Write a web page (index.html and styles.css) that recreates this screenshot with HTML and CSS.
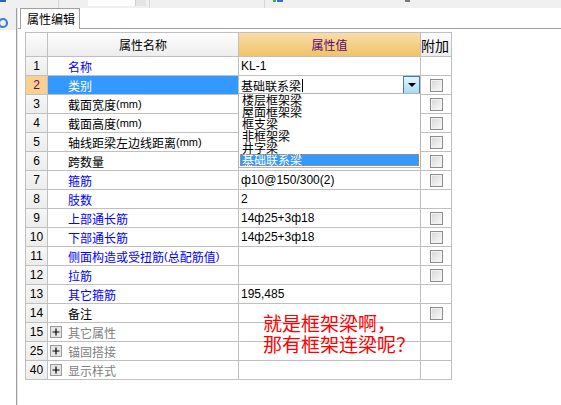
FILE: index.html
```html
<!DOCTYPE html>
<html lang="zh">
<head>
<meta charset="utf-8">
<title>属性编辑</title>
<link rel="stylesheet" href="styles.css">
</head>
<body>
<div class="top">
  <div class="tb-a"><span class="tb-blue"></span></div>
  <div class="tb-b"></div>
  <div class="tb-combo"><span class="tb-field"></span><span class="tb-btn"></span></div>
  <div class="tb-c"></div>
  <div class="tb-d"><span class="tb-g"></span><span class="tb-bl"></span></div>
  <div class="tb-e"><span class="tb-gray"></span></div>
</div>
<div class="main">
  <div class="side">
    <div class="side-top">
      <svg class="mag" width="16" height="22" viewBox="0 0 16 22"><circle cx="3" cy="15" r="4" fill="none" stroke="#3d7fd6" stroke-width="2.2"/></svg>
    </div>
  </div>
  <div class="divider"></div>
  <div class="pane">
    <div class="tabs"><div class="tab">属性编辑</div></div>
    <div class="page">
      <div class="grid">
        <div class="h"></div><div class="h">属性名称</div><div class="h hval">属性值</div><div class="h hadd">附加</div>

        <div class="num">1</div><div class="name blue">名称</div><div class="val">KL-1</div><div class="add"></div>
        <div class="num numsel">2</div><div class="name namesel">类别</div><div class="val combo"><span class="ctext">基础联系梁<span class="caret"></span></span><span class="ddbtn"><span class="tri"></span></span></div><div class="add"><span class="cb"></span></div>
        <div class="num">3</div><div class="name">截面宽度<span class="unit">(mm)</span></div><div class="val"></div><div class="add"><span class="cb"></span></div>
        <div class="num">4</div><div class="name">截面高度<span class="unit">(mm)</span></div><div class="val"></div><div class="add"><span class="cb"></span></div>
        <div class="num">5</div><div class="name">轴线距梁左边线距离<span class="unit">(mm)</span></div><div class="val"></div><div class="add"><span class="cb"></span></div>
        <div class="num">6</div><div class="name">跨数量</div><div class="val"></div><div class="add"><span class="cb"></span></div>
        <div class="num">7</div><div class="name blue">箍筋</div><div class="val">ф10@150/300(2)</div><div class="add"><span class="cb"></span></div>
        <div class="num">8</div><div class="name blue">肢数</div><div class="val">2</div><div class="add"></div>
        <div class="num">9</div><div class="name blue">上部通长筋</div><div class="val">14ф25+3ф18</div><div class="add"><span class="cb"></span></div>
        <div class="num">10</div><div class="name blue">下部通长筋</div><div class="val">14ф25+3ф18</div><div class="add"><span class="cb"></span></div>
        <div class="num">11</div><div class="name blue">侧面构造或受扭筋<span class="unit">(</span>总配筋值<span class="unit">)</span></div><div class="val"></div><div class="add"><span class="cb"></span></div>
        <div class="num">12</div><div class="name blue">拉筋</div><div class="val"></div><div class="add"><span class="cb"></span></div>
        <div class="num">13</div><div class="name blue">其它箍筋</div><div class="val">195,485</div><div class="add"></div>
        <div class="num">14</div><div class="name">备注</div><div class="val"></div><div class="add"><span class="cb"></span></div>
        <div class="num">15</div><div class="name group"><svg class="plus" width="12" height="12" viewBox="0 0 12 12"><rect x="0.5" y="0.5" width="11" height="11" fill="#e6e6e6" stroke="#9a9a9a"/><path d="M2.5 6h7M6 2.5v7" stroke="#000" stroke-width="1.2"/></svg>其它属性</div><div class="val"></div><div class="add"></div>
        <div class="num">25</div><div class="name group"><svg class="plus" width="12" height="12" viewBox="0 0 12 12"><rect x="0.5" y="0.5" width="11" height="11" fill="#e6e6e6" stroke="#9a9a9a"/><path d="M2.5 6h7M6 2.5v7" stroke="#000" stroke-width="1.2"/></svg>锚固搭接</div><div class="val"></div><div class="add"></div>
        <div class="num">40</div><div class="name group"><svg class="plus" width="12" height="12" viewBox="0 0 12 12"><rect x="0.5" y="0.5" width="11" height="11" fill="#e6e6e6" stroke="#9a9a9a"/><path d="M2.5 6h7M6 2.5v7" stroke="#000" stroke-width="1.2"/></svg>显示样式</div><div class="val"></div><div class="add"></div>

        <div class="ddlist">
          <div class="item">楼层框架梁</div>
          <div class="item">屋面框架梁</div>
          <div class="item">框支梁</div>
          <div class="item">非框架梁</div>
          <div class="item">井字梁</div>
          <div class="item sel">基础联系梁</div>
        </div>

        <div class="note">
          <div>就是框架梁啊，</div>
          <div>那有框架连梁呢？</div>
        </div>
      </div>
    </div>
  </div>
</div>
</body>
</html>
```

FILE: styles.css
```css
* { box-sizing: border-box; }
html, body { margin: 0; padding: 0; }
body {
  width: 561px;
  height: 405px;
  overflow: hidden;
  background: #fff;
  font-family: "Liberation Sans", "Noto Sans CJK SC", sans-serif;
  font-size: 12px;
  color: #000;
}

/* top toolbar strip */
.top {
  height: 8px;
  background: #f0f0f0;
  display: flex;
  align-items: flex-start;
}
.tb-a { width: 59px; height: 8px; border-right: 1px solid #d6d6d6; position: relative; }
.tb-blue { position: absolute; left: 0; top: 0; width: 6px; height: 2px; background: #2f63b8; }
.tb-b { width: 29px; height: 8px; }
.tb-combo { display: flex; height: 6px; }
.tb-field { width: 47px; height: 6px; background: #fff; }
.tb-btn { width: 11px; height: 6px; background: #e4e4e4; border-left: 1px solid #d0d0d0; }
.tb-c { width: 4px; height: 8px; border-right: 1px solid #d6d6d6; }
.tb-d { width: 115px; height: 8px; border-right: 1px solid #d6d6d6; position: relative; }
.tb-e { flex: 1; height: 8px; position: relative; }
.tb-g { position: absolute; left: 123px; top: 0; width: 3px; height: 2px; background: #3cae4a; }
.tb-bl { position: absolute; left: 127px; top: 0; width: 6px; height: 2px; background: #3a6fd0; }
.tb-gray { position: absolute; left: 140px; top: 0; width: 5px; height: 2px; background: #777; }

/* main area */
.main { display: flex; height: 397px; }
.side { width: 16px; display: flex; flex-direction: column; }
.side-top { height: 22px; background: #f0f0f0; }
.mag { display: block; }
.divider { width: 2px; border-left: 1px solid #a0a0a0; background: #e4e4e4; }
.pane { flex: 1; }

.tabs {
  height: 21px;
  border-bottom: 1px solid #a0a0a0;
  padding-left: 2px;
  display: flex;
  align-items: flex-start;
}
.tab {
  width: 60px;
  height: 21px;
  border: 1px solid #a0a0a0;
  border-bottom: none;
  background: #fff;
  padding-left: 6px;
  line-height: 19px;
  font-family: "Noto Sans CJK SC", sans-serif;
  font-size: 12px;
}

.page { padding: 3px 0 0 7px; }

.grid {
  position: relative;
  display: grid;
  grid-template-columns: 21px 190px 181px 30px;
  grid-template-rows: 23px repeat(17, 18px);
  gap: 1px;
  background: #c0c0c0;
  border: 1px solid #c0c0c0;
  width: max-content;
}

.grid > div { display: flex; align-items: center; white-space: nowrap; overflow: hidden; }

.h {
  background: linear-gradient(#fdfdfd, #ededed);
  justify-content: center;
  font-family: "Noto Sans CJK SC", sans-serif;
  font-size: 12px;
}
.grid > .hval { background: linear-gradient(#f9dca8, #f1c369); color: #5c0a6e; }
.grid > .hadd { justify-content: flex-start; font-size: 14px; padding-left: 0; }

.num {
  background: linear-gradient(#f6f6f6, #ececec);
  justify-content: center;
  font-size: 12px;
}
.grid > .numsel { background: #f9d18f; color: #5c0a6e; }

.name { background: #fff; padding-left: 20px; }
.unit { font-size: 11px; }
.blue { color: #0000ff; }
.grid > .namesel { background: #3399ff; color: #fff; }
.grid > .group { color: #808080; padding-left: 2px; }
.plus { margin-right: 6px; flex: none; }

.val { background: #fff; padding-left: 2px; }
.grid > .combo { justify-content: space-between; padding-right: 0; align-items: stretch; }
.ctext { display: flex; align-items: center; }
.caret { display: inline-block; width: 1px; height: 13px; background: #000; margin-left: 1px; }
.ddbtn {
  width: 17px;
  border: 1px solid #3d7bad;
  background: linear-gradient(#e6f5fd, #a7daf6);
  display: flex;
  align-items: center;
  justify-content: center;
}
.tri {
  width: 0; height: 0;
  border-left: 4px solid transparent;
  border-right: 4px solid transparent;
  border-top: 4px solid #000;
}

.add { background: #fff; justify-content: center; }
.cb {
  width: 13px;
  height: 13px;
  border: 1px solid #8d8d8d;
  background: linear-gradient(135deg, #d6d6d6, #fbfbfb);
  box-shadow: inset 0 0 0 1px #f2f2f2;
}

/* open dropdown list over the value column */
.grid > .ddlist {
  position: absolute;
  left: 212px;
  top: 60px;
  width: 183px;
  height: 75px;
  border: 1px solid #b4b4b4;
  background: #fff;
  display: block;
  padding: 0 1px;
  font-family: "Noto Sans CJK SC", sans-serif;
  font-size: 12px;
  line-height: 12px;
  overflow: visible;
}
.item { height: 12px; padding-left: 2px; }
.sel {
  background: #3399ff;
  color: #fff;
  outline: 1px dotted #f08020;
  outline-offset: -1px;
}

/* red annotation */
.grid > .note {
  position: absolute;
  left: 237px;
  top: 279px;
  display: block;
  color: #ff0000;
  font-family: "Noto Sans CJK SC", sans-serif;
  font-size: 19px;
  line-height: 21px;
  overflow: visible;
}
```
